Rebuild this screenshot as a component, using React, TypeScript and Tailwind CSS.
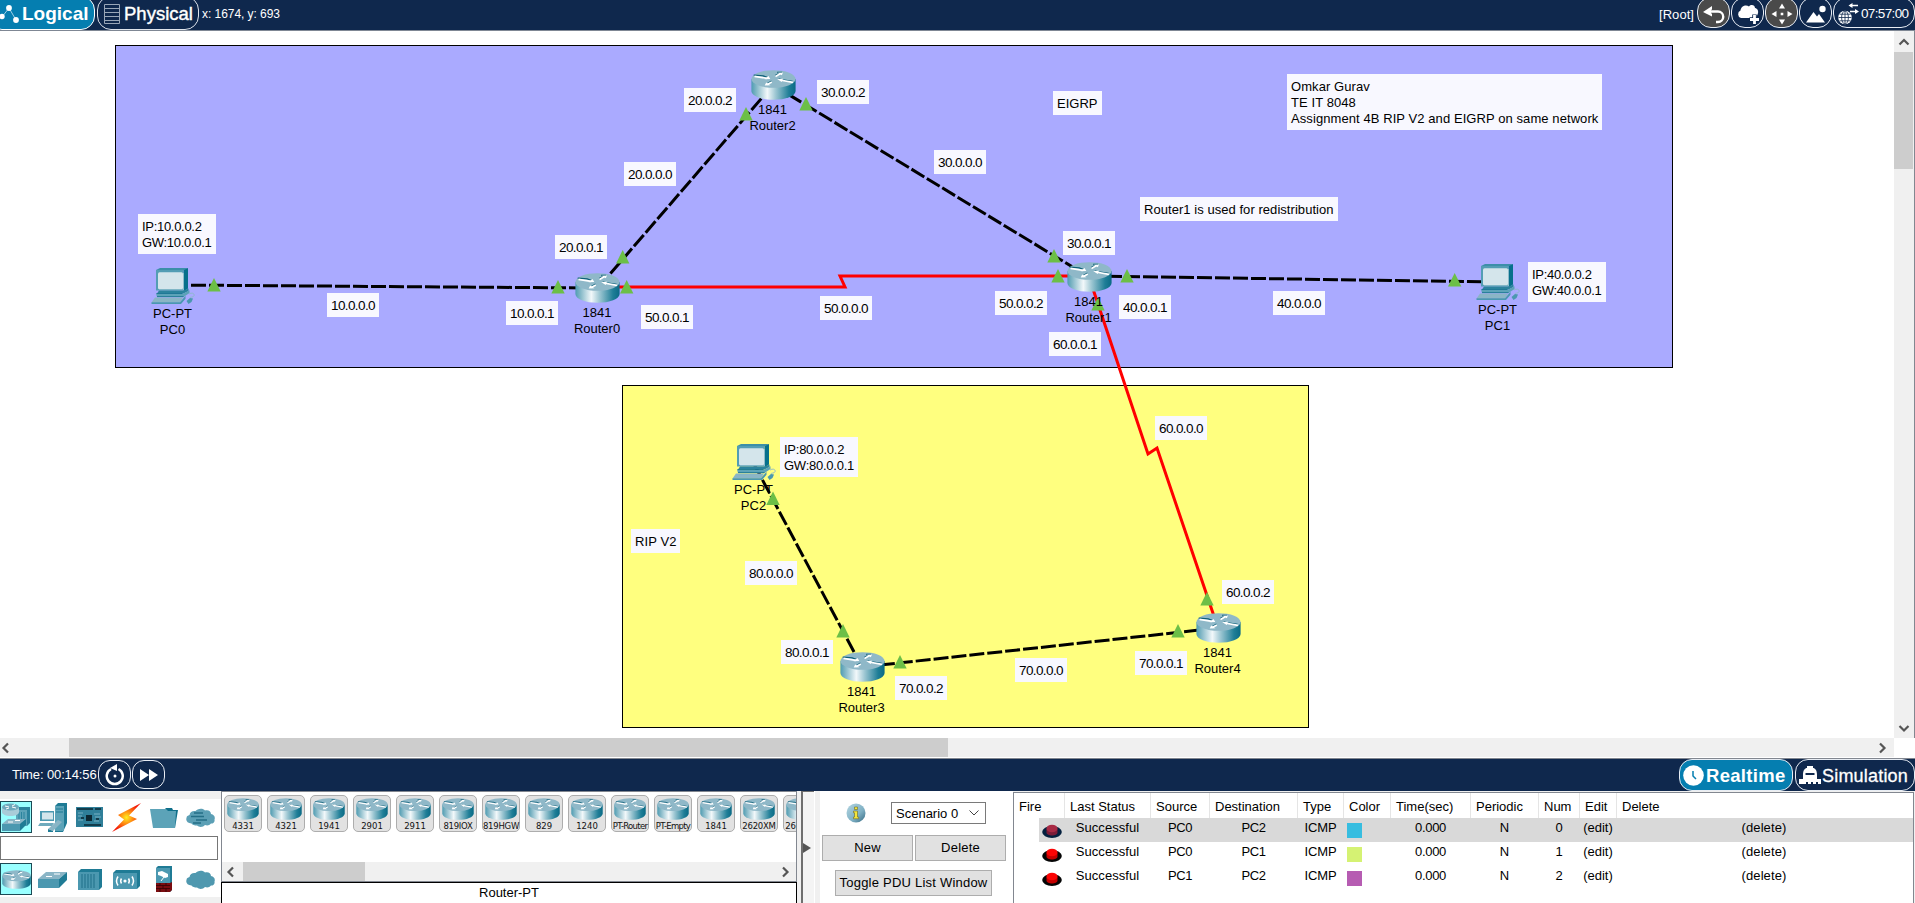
import type { ReactNode } from 'react';

const CANVAS_TOP = 31;
const at = (x: number, y: number) => ({ left: x, top: y - CANVAS_TOP });

/* ---------- device drawings ---------- */

function RouterIcon({ className }: { className: string }) {
  return (
    <svg viewBox="0 0 45 30" preserveAspectRatio="none" className={className}>
      <defs>
        <linearGradient id="routerBody" x1="0" x2="1">
          <stop offset="0" stopColor="#4f9cb2" />
          <stop offset="0.1" stopColor="#7db4c4" />
          <stop offset="0.36" stopColor="#f2f8fa" />
          <stop offset="0.55" stopColor="#9cc6d2" />
          <stop offset="0.85" stopColor="#1f7e97" />
          <stop offset="1" stopColor="#0a6a85" />
        </linearGradient>
      </defs>
      <path d="M.4 9v12c0 5 10 8.800 22.100 8.800S44.600 26 44.600 21V9z" fill="url(#routerBody)" />
      <ellipse cx="22.5" cy="9" rx="22.1" ry="8.8" fill="#8fb8c8" />
      <g fill="none" stroke="#0d5f78" strokeWidth="1.2" transform="translate(-.3 -.9)">
        <path d="M3 6l9.500.8 4 1.400M24.500 6.500l5-2.800M20.800 12l-4 2.500M42 12.200l-10-1.400-4-1.200M26.500 3.200h5" />
      </g>
      <g fill="none" stroke="#fff" strokeWidth="1.7">
        <path d="M3.500 6.300L16 8.300M24.500 6.600l5-3M20.800 12l-4.500 2.500M42 12.300L29 10" />
      </g>
      <path
        d="M13.500 9.300l5.800-.3-1.800-3zM26.500 2.800l5.500-.4-1.200 2.800zM19.500 15.200l-5.800.2 1.500-3zM26.200 9l5.800-.3-1.400 3.200z"
        fill="#fff"
      />
    </svg>
  );
}

function PcIcon() {
  return (
    <svg viewBox="0 0 44 36" className="block h-9 w-11">
      <path d="M5 2l4-2h28l-4.500 2.200z" fill="#3c8fa9" />
      <path d="M32.500 2L37 0v20.500l-4.500 3z" fill="#07708b" />
      <path d="M5 2h27.500v20.500H5z" fill="#539db4" />
      <rect x="7" y="4.300" width="25" height="17" rx="1.500" fill="#d4e5eb" />
      <path d="M32.500 5v17H8" fill="none" stroke="#8fbccb" strokeWidth="1" />
      <path d="M8 22.500h24.500l5-2v2.500l-5 2.500H6z" fill="#2b839d" />
      <path d="M5 25.500h27.500l6-3.200v2.700l-6 4H6z" fill="#5ca3b8" />
      <path d="M5.500 25.500h26M6 28.700h26.500" stroke="#0f6f8a" strokeWidth=".8" />
      <path d="M4 29.500h28l-3 5H.5z" fill="#8ab5c6" />
      <path d="M.5 34.300H29l5.500-6.500v3L30 36H.5z" fill="#4b98b0" />
      <path d="M38 26c4-2.500 7 1 4 2.700-2 .8-3 0-3 1.800" fill="none" stroke="#8cb9c8" strokeWidth=".9" />
      <path d="M35.500 33l3.500-3 3 .5-1.500 3.500-3 2z" fill="#4b98b0" />
    </svg>
  );
}

/* ---------- topology data ---------- */

const routers = [
  { x: 750.5, y: 70, name: 'Router2' },
  { x: 575, y: 273, name: 'Router0' },
  { x: 1066.5, y: 262, name: 'Router1' },
  { x: 839.5, y: 652, name: 'Router3' },
  { x: 1195.5, y: 613, name: 'Router4' },
];

const pcs = [
  { x: 151, y: 268, name: 'PC0' },
  { x: 1476, y: 264, name: 'PC1' },
  { x: 732, y: 444, name: 'PC2' },
];

const notes: { x: number; y: number; text: string }[] = [
  { x: 327, y: 293, text: '10.0.0.0' },
  { x: 506, y: 301, text: '10.0.0.1' },
  { x: 555, y: 235, text: '20.0.0.1' },
  { x: 641, y: 305, text: '50.0.0.1' },
  { x: 684, y: 88, text: '20.0.0.2' },
  { x: 624, y: 162, text: '20.0.0.0' },
  { x: 817, y: 80, text: '30.0.0.2' },
  { x: 934, y: 150, text: '30.0.0.0' },
  { x: 1063, y: 231, text: '30.0.0.1' },
  { x: 995, y: 291, text: '50.0.0.2' },
  { x: 1119, y: 295, text: '40.0.0.1' },
  { x: 1049, y: 332, text: '60.0.0.1' },
  { x: 1273, y: 291, text: '40.0.0.0' },
  { x: 820, y: 296, text: '50.0.0.0' },
  { x: 1155, y: 416, text: '60.0.0.0' },
  { x: 745, y: 561, text: '80.0.0.0' },
  { x: 781, y: 640, text: '80.0.0.1' },
  { x: 895, y: 676, text: '70.0.0.2' },
  { x: 1015, y: 658, text: '70.0.0.0' },
  { x: 1135, y: 651, text: '70.0.0.1' },
  { x: 1222, y: 580, text: '60.0.0.2' },
];

const wideNotes = [
  { x: 138, y: 214, cls: 'w-[78px] tracking-[-0.3px]', lines: ['IP:10.0.0.2', 'GW:10.0.0.1'] },
  { x: 1528, y: 262, cls: 'w-[78px] tracking-[-0.3px]', lines: ['IP:40.0.0.2', 'GW:40.0.0.1'] },
  { x: 780, y: 437, cls: 'w-[78px] tracking-[-0.25px]', lines: ['IP:80.0.0.2', 'GW:80.0.0.1'] },
  { x: 1053, y: 91, cls: 'w-[49px] tracking-[0px]', lines: ['EIGRP'] },
  { x: 631, y: 529, cls: 'w-[49px] tracking-[0.1px]', lines: ['RIP V2'] },
  { x: 1140, y: 197, cls: 'w-[198px] tracking-[0.05px]', lines: ['Router1 is used for redistribution'] },
  {
    x: 1287,
    y: 74,
    cls: 'w-[315px] tracking-[0.08px]',
    lines: ['Omkar Gurav', 'TE IT 8048', 'Assignment 4B RIP V2 and EIGRP on same network'],
  },
];

const ethernet = [
  'M173 285L598 288',
  'M773 85L598 288',
  'M773 85L1089 277',
  'M1089 276L1498 282',
  'M754 464L862 667',
  'M862 667L1218 628',
];
const serial = ['M598 287H845L840 276H1089', 'M1089 277L1148 454L1157 448L1218 628'];

const ports = [
  [214, 278], [558, 280], [622.7, 250], [626.7, 280], [746, 107], [806, 97],
  [1054, 249], [1058, 269], [1127, 269], [1454.7, 273], [1098, 297],
  [773, 491.5], [843, 624], [900, 655], [1207, 592], [1178, 624],
];

function NodeLabel({ x, y, type, name }: { x: number; y: number; type: string; name: string }) {
  return (
    <div className="absolute w-20 text-center text-[13px] leading-4" style={at(x - 40, y)}>
      <div>{type}</div>
      <div>{name}</div>
    </div>
  );
}

function Topology() {
  return (
    <div className="relative min-w-0 flex-1 overflow-hidden bg-white">
      <div className="absolute h-[323px] w-[1558px] border border-black bg-[#aaaaff]" style={at(115, 45)} />
      <div className="absolute h-[343px] w-[687px] border border-black bg-[#ffff7f]" style={at(622, 385)} />
      <svg className="absolute inset-0" width="1894" height="707" viewBox="0 31 1894 707" fill="none">
        {ethernet.map((d) => (
          <path key={d} d={d} stroke="#000" strokeWidth="3" strokeDasharray="15 3" />
        ))}
        {serial.map((d) => (
          <path key={d} d={d} stroke="#ff0000" strokeWidth="3" />
        ))}
      </svg>
      {routers.map((r) => (
        <div key={r.name} className="absolute" style={at(r.x, r.y)}>
          <RouterIcon className="block h-[30px] w-[45px]" />
        </div>
      ))}
      {pcs.map((p) => (
        <div key={p.name} className="absolute" style={at(p.x, p.y)}>
          <PcIcon />
        </div>
      ))}
      <svg className="absolute inset-0" width="1894" height="707" viewBox="0 31 1894 707">
        {ports.map(([x, y]) => (
          <path key={`${x}-${y}`} d={`M${x} ${y}l6.700 13.500h-13.400z`} fill="#6cbf47" />
        ))}
      </svg>
      {routers.map((r) => (
        <NodeLabel key={r.name} x={r.x + 22} y={r.y + 32} type="1841" name={r.name} />
      ))}
      {pcs.map((p) => (
        <NodeLabel key={p.name} x={p.x + 21.5} y={p.y + 38} type="PC-PT" name={p.name} />
      ))}
      {notes.map((n) => (
        <div
          key={n.text}
          className="absolute h-6 w-[52px] whitespace-nowrap bg-[#f8f8ff] pl-1 pt-[5px] text-[13.5px] leading-4 tracking-[-0.6px]"
          style={at(n.x, n.y)}
        >
          {n.text}
        </div>
      ))}
      {wideNotes.map((n) => (
        <div
          key={n.lines[0]}
          className={`absolute whitespace-nowrap bg-[#f8f8ff] pb-[3px] pl-1 pt-[5px] text-[13px] leading-4 ${n.cls}`}
          style={at(n.x, n.y)}
        >
          {n.lines.map((l) => (
            <div key={l}>{l}</div>
          ))}
        </div>
      ))}
    </div>
  );
}

/* ---------- small pieces ---------- */

function Chevron({ d, className = '' }: { d: string; className?: string }) {
  return (
    <svg viewBox="0 0 12 12" className={`size-3 shrink-0 ${className}`} fill="none" stroke="#555" strokeWidth="2.2">
      <path d={d} />
    </svg>
  );
}
const LEFT = 'M8 1.500L3.500 6 8 10.500';
const RIGHT = 'M4 1.500L8.500 6 4 10.500';
const UP = 'M1.500 8.500L6 4l4.500 4.500';
const DOWN = 'M1.500 4L6 8.500 10.500 4';

function Pill({ className, children }: { className: string; children: ReactNode }) {
  return (
    <div className={`flex shrink-0 items-center border border-[#e8edf4] ${className}`}>
      {children}
    </div>
  );
}

function TopBar() {
  return (
    <header className="flex h-[31px] shrink-0 items-start overflow-hidden border-b border-[#7f8794] bg-[#0f284d] text-white">
      <div className="-ml-3 -mt-1 flex h-[34px] w-[107px] shrink-0 items-center rounded-[14px] border border-white bg-[#057eb0] pl-[10px] pt-0.5">
        <svg viewBox="0 0 21 20" className="h-5 w-[21px]">
          <path d="M3 13L10 4l7 12" stroke="#9fd0e6" strokeWidth="1" fill="none" />
          <circle cx="3" cy="12.5" r="2.7" fill="#fff" />
          <circle cx="10" cy="4" r="2.9" fill="#fff" />
          <circle cx="17" cy="16" r="2.9" fill="#fff" />
        </svg>
        <span className="ml-0.5 text-[19px] font-bold leading-5">Logical</span>
      </div>
      <div className="-mt-1 ml-0.5 flex h-[34px] w-[102px] shrink-0 items-center rounded-[14px] border border-[#dfe4ec] pl-1.5 pt-0.5">
        <svg viewBox="0 0 16 20" className="h-5 w-4" fill="none" stroke="#9aa7b8">
          <path d="M.5.5h15v19H.5zM1 4.500h14M1 8.500h14M1 12.500h14M1 16.500h14" />
        </svg>
        <span className="ml-1 text-[18.5px] leading-5 [-webkit-text-stroke:0.4px_white]">Physical</span>
      </div>
      <span className="ml-[3px] mt-[6px] text-[12px] leading-4 tracking-[-0.05px]">x: 1674, y: 693</span>

      <div className="ml-auto flex items-start">
        <span className="mr-[3px] mt-[7px] text-[13px] leading-4 tracking-[0.05px]">[Root]</span>
        <div className="-mt-[3px] flex gap-px">
          <Pill className="h-[31px] w-[33px] justify-center rounded-[14px] bg-[#4a4a4a] pt-0.5">
            <svg viewBox="0 0 22 20" className="h-5 w-[22px]">
              <path d="M0 8l9-6v3.700h-1v3.800h1v3z" fill="#fff" />
              <path d="M7 7.500h8a4.500 4.500 0 010 10.500h-2" fill="none" stroke="#fff" strokeWidth="2.4" />
            </svg>
          </Pill>
          <Pill className="h-[31px] w-[33px] justify-center rounded-[14px] pt-0.5">
            <svg viewBox="0 0 22 22" className="h-[22px] w-[22px]" fill="#fff">
              <path d="M4 15a4 4 0 01-.5-7.500C4 3 9 1 12 3.500c2-2.500 6-1.500 6 1.500 3 .5 4 4 2.500 6.500L19 15z" />
              <path d="M12.500 16.500h9.500M17.500 11.500v10" stroke="#0f284d" strokeWidth="4.500" />
              <path d="M13 16.500h9M17.500 12v9" stroke="#fff" strokeWidth="2.8" />
            </svg>
          </Pill>
          <Pill className="h-[31px] w-[33px] justify-center rounded-[14px] bg-[#4a4a4a] pt-0.5">
            <svg viewBox="0 0 22 22" className="h-[22px] w-[22px]" fill="#fff">
              <path d="M11 .5l3 5H8zM11 21.500l3-5H8zM.5 11l5-3v6zM21.500 11l-5-3v6zM9.700 9.700h2.600v2.600H9.700z" />
            </svg>
          </Pill>
          <Pill className="h-[31px] w-[33px] justify-center rounded-[14px] pt-0.5">
            <svg viewBox="0 0 22 20" className="h-5 w-[22px]" fill="#fff">
              <path d="M1 18.500L8.500 8l3.500 4.500 2-2.500 6 8.500z" />
              <circle cx="17.5" cy="5" r="3.2" />
            </svg>
          </Pill>
          <Pill className="h-[31px] w-[82px] gap-[2px] rounded-[14px] pl-[3px] pt-0.5">
            <svg viewBox="0 0 22 22" className="h-[22px] w-[22px]">
              <circle cx="8" cy="14.5" r="6.8" fill="#fff" />
              <path d="M8 8v13M1.500 14.500h13M2.500 11.200h11M2.500 17.800h11" stroke="#0f284d" strokeWidth=".8" />
              <ellipse cx="8" cy="14.5" rx="3.4" ry="6.5" fill="none" stroke="#0f284d" strokeWidth=".8" />
              <path d="M13 2.500h8M13 8.500h7" stroke="#fff" strokeWidth="1.6" />
              <path d="M11.500 2.500l4-2.500v5zM22 8.500L18 6v5z" fill="#fff" />
            </svg>
            <span className="text-[13.5px] leading-4 tracking-[-0.65px]">07:57:00</span>
          </Pill>
        </div>
      </div>
    </header>
  );
}

function TimeBar() {
  return (
    <div className="flex h-8 shrink-0 items-start bg-[#0f284d] text-white">
      <span className="ml-3 mt-[8px] w-[86px] whitespace-nowrap text-[13px] leading-4 tracking-[-0.12px]">Time: 00:14:56</span>
      <Pill className="mt-px h-[29px] w-[33px] justify-center rounded-[12px]">
        <svg viewBox="0 0 20 22" className="h-[22px] w-5">
          <path d="M13.500 5A8 8 0 116 5" fill="none" stroke="#fff" strokeWidth="2.5" />
          <path d="M5 4l7-4v7z" fill="#fff" />
          <circle cx="10" cy="12" r="1.5" fill="#fff" />
        </svg>
      </Pill>
      <Pill className="ml-px mt-px h-[29px] w-[33px] justify-center rounded-[12px]">
        <svg viewBox="0 0 18 12" className="h-3 w-[18px]" fill="#fff">
          <path d="M0 0l9 6-9 6zM9 0l9 6-9 6z" />
        </svg>
      </Pill>
      <div className="ml-auto flex gap-0.5">
        <Pill className="h-8 w-[114px] gap-0.5 rounded-[13px] bg-[#057eb0] pl-[3px]">
          <svg viewBox="0 0 21 21" className="size-[21px]">
            <circle cx="10.5" cy="10.5" r="10.3" fill="#fff" />
            <path d="M10 6v5l3 3" stroke="#057eb0" strokeWidth="1.5" fill="none" />
          </svg>
          <span className="pt-px text-[18.5px] font-bold leading-5 tracking-[0.3px]">Realtime</span>
        </Pill>
        <Pill className="h-8 w-[120px] gap-px rounded-[13px] pl-[3px]">
          <svg viewBox="0 0 22 20" className="h-5 w-[22px]" fill="#fff">
            <path d="M4 10c0-5 2-7 4-7V1h6v2c2 0 4 2 4 7v4h4v5h-3v-2h-2v2h-3v-2h-2v2H9v-2H7v2H0v-5h4z" />
            <path d="M6.500 8h9v2h-9z" fill="#0f284d" />
          </svg>
          <span className="pt-px text-[18px] leading-5 tracking-[0.2px] [-webkit-text-stroke:0.3px_white]">Simulation</span>
        </Pill>
      </div>
    </div>
  );
}

/* ---------- device palette ---------- */

const cloud =
  'M5.500 16.500C1.500 16.500-.5 13.500.5 11c0-2 1.500-2.500 3-3 .5-3 3-4.500 6-4C11 1.500 17 .5 19 3.500c3-1 6 .5 6 3.500 3 .5 4.500 3 3.500 5.500.5 2.500-1 4-3.500 4-1.500 2-4 2.500-6 1.500-2 2.500-6 2.500-8 .5-2.500 0-4.500-.5-5.500-2z';

function SwitchIcon() {
  return (
    <svg viewBox="0 0 29 17" className="h-[17px] w-[29px]">
      <path d="M8 1h21l-8 7H0z" fill="#8ab5c6" />
      <path d="M0 8h21v9H0z" fill="#4b98b0" />
      <path d="M21 8l8-7v8l-8 8z" fill="#1f7b95" />
      <path d="M8 5.500h6M16 3h6" stroke="#fff" strokeWidth="1" />
    </svg>
  );
}

function PaletteRow({ children, first }: { children: ReactNode[]; first: ReactNode }) {
  return (
    <div className="flex h-8 items-center">
      <div className="mr-0.5 flex h-8 w-8 items-center justify-center border border-[#1b4a55] bg-[#99ffff]">{first}</div>
      {children.map((c, i) => (
        <div key={i} className="flex w-[37px] items-center justify-center">
          {c}
        </div>
      ))}
    </div>
  );
}

function Palette() {
  return (
    <div className="flex w-[221px] shrink-0 flex-col bg-[#f0f0f0] pt-2">
      <div className="h-[98px] bg-white pt-0.5">
        <PaletteRow
          first={
            <svg viewBox="0 0 30 30" className="size-[30px]">
              <path d="M15 8l3-3h11v16l-3 3H15z" fill="#2b839d" />
              <path d="M15 8h11v16H15z" fill="#5ca3b8" />
              <path d="M18 10v13M20.500 10v13M23 10v13" stroke="#2b839d" />
              <path d="M1 5v5c0 2.500 4 4 8.500 4s8.500-1.500 8.500-4V5z" fill="#a9ccd8" />
              <ellipse cx="9.5" cy="5" rx="8.5" ry="3.6" fill="#6eaabd" />
              <path d="M4 4l4 1M11 5l4 1M11 4l3-1.500M8 6L5 7" stroke="#fff" />
              <path d="M7 17h18l-6 5H1z" fill="#8ab5c6" />
              <path d="M1 22h18v7H1z" fill="#4b98b0" />
              <path d="M19 22l6-5v6l-6 6z" fill="#1f7b95" />
              <path d="M7 20h5M14 18.500h5" stroke="#fff" />
            </svg>
          }
        >
          <svg viewBox="0 0 29 29" className="size-[29px]">
            <path d="M17 3l3-3h9v20l-4 9h-8z" fill="#1f7b95" />
            <path d="M17 3h9v25h-9z" fill="#5ca3b8" />
            <path d="M18 6h7M18 9h7" stroke="#1f7b95" />
            <path d="M2 8h14v10H2z" fill="#4b98b0" />
            <path d="M4 9.500h11v7H4z" fill="#d4e5eb" />
            <path d="M2 20h14l-2 3H0z" fill="#6eaabd" />
            <path d="M10 26l10-9 4 2-9 9z" fill="#8ab5c6" />
            <path d="M10 26l5 2v1h-5z" fill="#1f7b95" />
          </svg>
          <svg viewBox="0 0 27 20" className="h-5 w-[27px]">
            <path d="M0 0h27v20H0z" fill="#2f7f99" />
            <path d="M1 1h16v2H1zM19 1h6v2h-6zM8 17h17v2H8z" fill="#123c4b" />
            <path d="M10 8h6v6h-6z" fill="#0c2833" />
            <path d="M2 6h5M2 9h4M18 7h6M19 10h6M2 13h5M18 14h5" stroke="#79b2c4" />
            <path d="M5 11h3M20 12h3" stroke="#123c4b" strokeWidth="2" />
          </svg>
          <svg viewBox="0 0 29 29" className="size-[29px]">
            <defs>
              <radialGradient id="bolt">
                <stop offset="0" stopColor="#ffee22" />
                <stop offset=".45" stopColor="#ff8a10" />
                <stop offset="1" stopColor="#f31a08" />
              </radialGradient>
            </defs>
            <path d="M29 0L6 12l6 4.500L0 29l25-13-8-3.500z" fill="url(#bolt)" />
          </svg>
          <svg viewBox="0 0 28 21" className="h-[21px] w-7">
            <path d="M14 3l2-2h6l1 2h5l-3 18H14z" fill="#0f6f8a" />
            <path d="M0 2h16l2 2h8l-1 17H3z" fill="#5ca3b8" />
          </svg>
          <svg viewBox="0 0 29 21" className="h-[21px] w-[29px]">
            <path d={cloud} fill="#5b9fb5" />
            <path d="M8 6h9M5 9.500h13M10 13h11M7 16h8" stroke="#246f87" strokeWidth="1.3" />
          </svg>
        </PaletteRow>
        <div className="mt-[3px] h-6 w-[218px] border border-[#767676] bg-white" />
        <div className="mt-[3px]">
          <PaletteRow first={<RouterIcon className="h-[19px] w-[29px]" />}>
            <SwitchIcon />
            <svg viewBox="0 0 24 21" className="h-[21px] w-6">
              <path d="M0 3l3-3h21v18l-3 3H0z" fill="#1f7b95" />
              <path d="M0 3h21v18H0z" fill="#4b98b0" />
              <path d="M4 5v14M7 5v14M10 5v14M13 5v14M16 5v14" stroke="#1f6f88" />
            </svg>
            <svg viewBox="0 0 27 19" className="h-[19px] w-[27px]">
              <path d="M0 3l3-3h24v16l-3 3H0z" fill="#1f7b95" />
              <path d="M0 3h24v16H0z" fill="#4b98b0" />
              <circle cx="12" cy="11" r="1.6" fill="#fff" />
              <path
                d="M8.500 8.500c-1 1.500-1 3.500 0 5M15.500 8.500c1 1.500 1 3.500 0 5M5 6.500c-2 3-2 6 0 9M19 6.500c2 3 2 6 0 9"
                stroke="#fff"
                strokeWidth="1.5"
                fill="none"
              />
            </svg>
            <svg viewBox="0 0 16 26" className="h-[26px] w-4">
              <path d="M0 2l2-2h14v24l-2 2H0z" fill="#1f7b95" />
              <path d="M0 2h14v15H0z" fill="#4b98b0" />
              <path d="M0 17h14l2-1v8l-2 2H0z" fill="#7a0c10" />
              <path d="M0 19.500h14M0 22.500h14M4 17v2.500M10 17v2.500M7 19.500v3M4 22.500V26M10 22.500V26" stroke="#330305" strokeWidth=".8" />
              <path d="M2 6l4-1 2 1 4 2v3l-3 1-4-2-3-1z" fill="#fff" />
              <path d="M5 15l3-4" stroke="#fff" />
            </svg>
            <svg viewBox="0 0 29 21" className="h-[21px] w-[29px]">
              <path d={cloud} fill="#4f98af" />
            </svg>
          </PaletteRow>
        </div>
      </div>
    </div>
  );
}

const models = [
  '4331', '4321', '1941', '2901', '2911', '819IOX', '819HGW', '829', '1240', 'PT-Router', 'PT-Empty', '1841', '2620XM', '2621XM',
];

function DeviceList() {
  return (
    <div className="flex w-[576px] shrink-0 flex-col">
      <div className="flex h-[93px] flex-col border border-[#828790] bg-white">
        <div className="flex min-w-0 gap-[5px] overflow-hidden pl-0.5 pt-[3px]">
          {models.map((m) => (
            <div
              key={m}
              className="flex h-[37px] w-[38px] shrink-0 flex-col items-center rounded-[5px] border border-[#adadad] bg-[#e2e2e2] pt-[2px]"
            >
              <RouterIcon className="h-[22px] w-8 shrink-0" />
              <span
                className={`mt-[1px] whitespace-nowrap font-['DejaVu_Sans'] text-[8.5px] leading-[10px] text-[#111] ${
                  m.startsWith('PT') ? 'tracking-[-0.7px]' : m.length > 5 ? 'tracking-[-0.25px]' : 'tracking-[0px]'
                }`}
              >
                {m}
              </span>
            </div>
          ))}
        </div>
        <div className="mt-auto flex h-[19px] items-center justify-between bg-[#f0f0f0] pl-[3px] pr-[5px]">
          <Chevron d={LEFT} />
          <div className="ml-1.5 h-[19px] w-[122px] bg-[#cdcdcd]" />
          <Chevron d={RIGHT} className="ml-auto" />
        </div>
      </div>
      <div className="flex-1 border-x border-t border-black bg-white text-center text-[13px] leading-[20px]">Router-PT</div>
    </div>
  );
}

function ScenarioPanel() {
  return (
    <div className="flex w-[193px] shrink-0 flex-col bg-white pt-[11px]">
      <div className="flex h-[22px] items-center">
        <svg viewBox="0 0 20 20" className="ml-[26px] size-5">
          <defs>
            <linearGradient id="info" x1="0" y1="0" x2="1" y2="1">
              <stop offset="0" stopColor="#b4d6e2" />
              <stop offset=".6" stopColor="#7fb0c4" />
              <stop offset="1" stopColor="#33677f" />
            </linearGradient>
          </defs>
          <circle cx="10" cy="10" r="9.5" fill="url(#info)" />
          <path d="M8.500 4h3v2.500h-3zM7.500 8h4v6h1.200v1.800H7.500V14h1V9.800h-1z" fill="#f4e53a" stroke="#6c6a2a" strokeWidth=".6" />
        </svg>
        <div className="ml-[25px] flex h-[22px] w-[95px] items-center border border-[#7a7a7a] bg-white pl-1">
          <span className="pt-px text-[13px] leading-4">Scenario 0</span>
          <svg viewBox="0 0 10 6" className="ml-auto mr-[6px] h-[6px] w-[10px]" fill="none" stroke="#444">
            <path d="M.5.5L5 5 9.500.5" />
          </svg>
        </div>
      </div>
      <div className="mt-[11px] flex gap-0.5 pl-0.5 text-[13px]">
        <button className="h-[26px] w-[91px] border border-[#adadad] bg-[#e1e1e1] tracking-[0.2px]">New</button>
        <button className="h-[26px] w-[91px] border border-[#adadad] bg-[#e1e1e1] tracking-[0.2px]">Delete</button>
      </div>
      <button className="ml-[15px] mt-[9px] h-[26px] w-[157px] whitespace-nowrap border border-[#adadad] bg-[#e1e1e1] text-[13px] tracking-[0.22px]">
        Toggle PDU List Window
      </button>
    </div>
  );
}

const GRID = 'grid grid-cols-[51px_86px_59px_88px_46px_47px_80px_68px_41px_37px_1fr]';
const headers = ['Fire', 'Last Status', 'Source', 'Destination', 'Type', 'Color', 'Time(sec)', 'Periodic', 'Num', 'Edit', 'Delete'];
const rows = [
  { src: 'PC0', dst: 'PC2', swatch: 'bg-[#37bde0]', num: '0', selected: true },
  { src: 'PC0', dst: 'PC1', swatch: 'bg-[#d5f273]', num: '1', selected: false },
  { src: 'PC1', dst: 'PC2', swatch: 'bg-[#b65cb2]', num: '2', selected: false },
];

function PduTable() {
  return (
    <div className="mt-px flex-1 border-l border-r border-t border-[#828790] bg-white text-[13px] leading-4">
      <div className={`${GRID} h-[25px]`}>
        {headers.map((h, i) => (
          <div
            key={h}
            className={`whitespace-nowrap pl-[5px] pt-[6px] ${i < headers.length - 1 ? 'border-r border-[#e5e5e5]' : ''}`}
          >
            {h}
          </div>
        ))}
      </div>
      {rows.map((r) => (
        <div
          key={r.num}
          className={`${GRID} h-6 text-center ${r.selected ? 'bg-[linear-gradient(90deg,#fff_25px,#d9d9d9_25px)]' : ''}`}
        >
          <div className="flex items-end justify-end pb-1 pr-[3px]">
            <svg viewBox="0 0 20 14" className="h-[14px] w-5">
              <ellipse cx="10" cy="8" rx="9.8" ry="6" fill={r.selected ? '#04203f' : '#050505'} />
              <path d="M4.500 5v3.500c0 4 11 4 11 0V5z" fill={r.selected ? '#7b1c38' : '#c40000'} />
              <ellipse cx="10" cy="4.5" rx="5.5" ry="3.8" fill={r.selected ? '#a82a45' : '#fb0404'} />
            </svg>
          </div>
          <div className="pr-px pt-0.5 tracking-[0.05px]">Successful</div>
          <div className="pr-px pt-0.5 tracking-[-0.4px]">{r.src}</div>
          <div className="pr-px pt-0.5 tracking-[-0.4px]">{r.dst}</div>
          <div className="pr-px pt-0.5 tracking-[-0.1px]">ICMP</div>
          <div className="flex items-end pb-1 pl-[3px]">
            <div className={`size-[15px] ${r.swatch}`} />
          </div>
          <div className="pr-px pt-0.5 tracking-[-0.3px]">0.000</div>
          <div className="pr-px pt-0.5">N</div>
          <div className="pr-px pt-0.5">{r.num}</div>
          <div className="pr-px pt-0.5">(edit)</div>
          <div className="pr-0.5 pt-0.5 tracking-[0.1px]">(delete)</div>
        </div>
      ))}
    </div>
  );
}

export default function App() {
  return (
    <div className="flex h-[903px] w-[1915px] flex-col overflow-hidden bg-[#f0f0f0] font-['Liberation_Sans',Arial,sans-serif] text-black">
      <TopBar />
      <div className="flex h-[707px] shrink-0">
        <Topology />
        <div className="flex w-[19px] flex-col items-center bg-[#f0f0f0]">
          <div className="flex h-[21px] items-center">
            <Chevron d={UP} />
          </div>
          <div className="h-[117px] w-full bg-[#cdcdcd]" />
          <div className="mt-auto flex h-[21px] items-center">
            <Chevron d={DOWN} />
          </div>
        </div>
        <div className="ml-px w-px bg-[#828790]" />
      </div>
      <div className="flex h-[21px] shrink-0 flex-col border-b border-[#828790] bg-white">
        <div className="flex h-[19px] w-[1894px] items-center bg-[#f0f0f0]">
          <Chevron d={LEFT} />
          <div className="ml-[57px] h-[19px] w-[879px] bg-[#cdcdcd]" />
          <Chevron d={RIGHT} className="ml-auto mr-1.5" />
        </div>
      </div>
      <TimeBar />
      <div className="flex h-28 shrink-0">
        <Palette />
        <DeviceList />
        <div className="ml-1 flex w-[13px] items-center border-l-2 border-t border-[#6f6f6f] bg-[#f4f4f4]">
          <svg viewBox="0 0 8 10" className="h-[10px] w-2">
            <path d="M0 0l8 5-8 5z" fill="#555" />
          </svg>
        </div>
        <div className="w-1.5 border-l border-white bg-[#f0f0f0]" />
        <ScenarioPanel />
        <PduTable />
        <div className="w-px bg-[#f0f0f0]" />
      </div>
    </div>
  );
}
